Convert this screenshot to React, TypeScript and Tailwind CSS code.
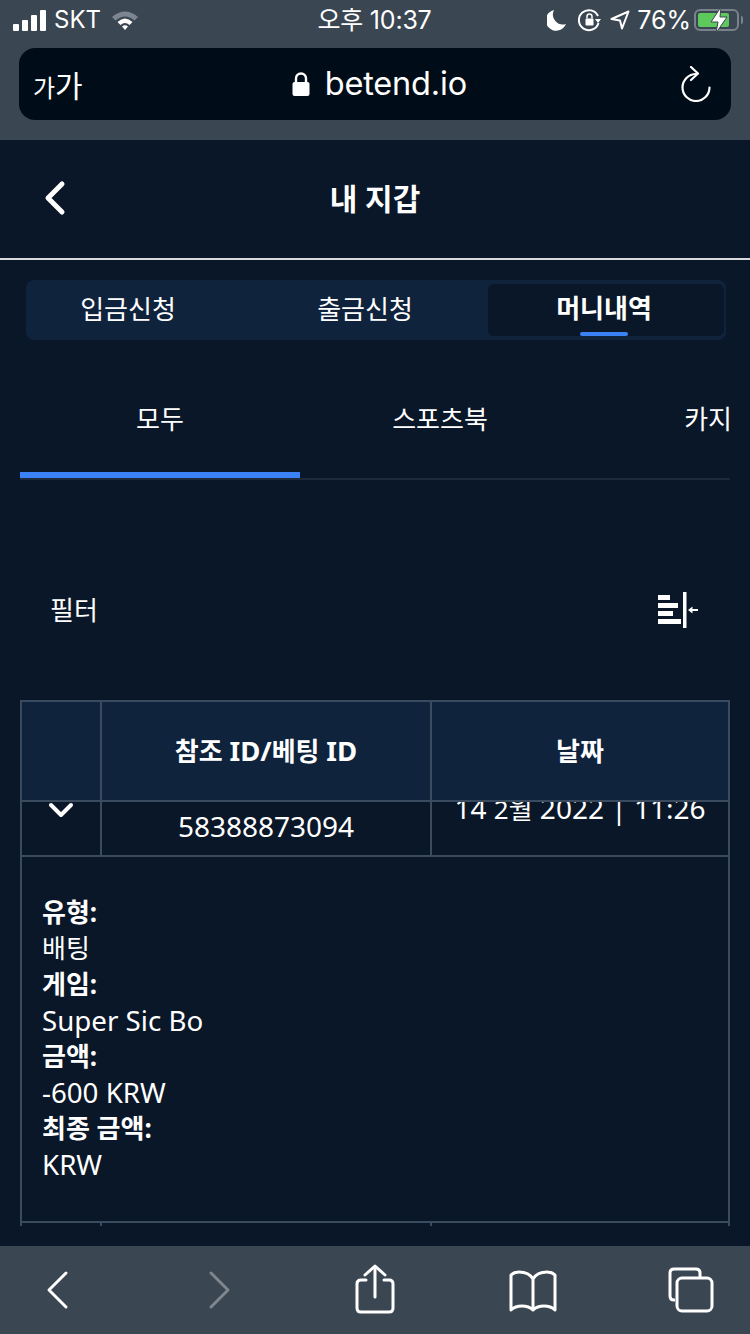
import React from 'react';

const font = "font-['Noto_Sans','Noto_Sans_CJK_KR',sans-serif]";

function StatusBar() {
  return (
    <div className="h-[40px] flex items-center justify-between pl-[13px] pr-[7px] text-white font-['Inter','Noto_Sans_CJK_KR',sans-serif]">
      <div className="flex items-center w-[200px]">
        <div className="flex items-end gap-[3px] h-[21px]">
          <div className="w-[6px] h-[7px] bg-white rounded-[1px]" />
          <div className="w-[6px] h-[11px] bg-white rounded-[1px]" />
          <div className="w-[6px] h-[16px] bg-white rounded-[1px]" />
          <div className="w-[6px] h-[21px] bg-white rounded-[1px]" />
        </div>
        <span className="ml-[8px] text-[24px] leading-none">SKT</span>
        <svg width="28" height="22" viewBox="0 0 28 22" className="ml-[10px]">
          <path d="M1 8 Q14 -3 27 8 L23.5 11.5 Q14 3.5 4.5 11.5Z" fill="#7d8690" />
          <path d="M6.5 13 Q14 6 21.5 13 L18.5 16 Q14 12 9.5 16Z" fill="#fff" />
          <path d="M11 17.5 Q14 14.8 17 17.5 L14 21Z" fill="#fff" />
        </svg>
      </div>
      <span className="text-[25px] leading-none tracking-[-0.2px] -ml-[1px]">오후 10:37</span>
      <div className="flex items-center justify-end w-[206px]">
        <svg width="20" height="22" viewBox="0 0 20 22">
          <path d="M7 1 A10.5 10.5 0 1 0 19 15 A10 10 0 0 1 7 1Z" fill="#fff" />
        </svg>
        <svg width="24" height="24" viewBox="0 0 24 24" className="ml-[11px]" fill="none">
          <path d="M20 8 A10 10 0 1 0 20.5 15" stroke="#fff" strokeWidth="2" />
          <path d="M17 11 L23 11 L20 15Z" fill="#fff" />
          <rect x="7.5" y="10.5" width="8" height="7" rx="1" fill="#fff" />
          <path d="M9 10.5 V8.5 A2.5 2.5 0 0 1 14 8.5 V10.5" stroke="#fff" strokeWidth="1.5" />
        </svg>
        <svg width="20" height="20" viewBox="0 0 20 20" className="ml-[8px]" fill="none">
          <path d="M18.5 1.5 L1.5 9 L10 10.5 L12 18.5Z" stroke="#fff" strokeWidth="2" strokeLinejoin="round" />
        </svg>
        <span className="ml-[7px] text-[25px] leading-none">76%</span>
        <div className="relative ml-[3px] w-[45px] h-[22px] border-2 border-[#79828c] rounded-[6px] p-[2px]">
          <div className="w-[31px] h-full bg-[#5dc85c] rounded-[2px]" />
          <svg width="22" height="28" viewBox="0 0 22 28" className="absolute left-[12px] -top-[5px]">
            <path d="M13 1 L3 16 L10 16 L8 27 L19 11 L12 11Z" fill="#fff" stroke="#3a4651" strokeWidth="1" />
          </svg>
        </div>
        <div className="ml-[2px] w-[2px] h-[8px] bg-[#79828c] rounded-r-sm" />
      </div>
    </div>
  );
}

function AddressBar() {
  return (
    <div className="mx-[19px] mt-[8px] h-[72px] rounded-[16px] bg-[#000d18] flex items-center justify-between pl-[14px] pr-[19px] text-white">
      <span className="text-[30px] leading-none font-['Noto_Sans_CJK_KR',sans-serif] flex items-baseline">
        <span className="text-[24px]">가</span>가
      </span>
      <div className="flex items-center gap-[15px] -ml-[4px]">
        <svg width="18" height="26" viewBox="0 0 18 26" fill="none">
          <path d="M4 12 V7.5 A5 5 0 0 1 14 7.5 V12" stroke="#fff" strokeWidth="2.4" />
          <rect x="0.5" y="11" width="17" height="14" rx="2" fill="#fff" />
        </svg>
        <span className="text-[32.5px] leading-none font-['Inter',sans-serif] tracking-[-0.2px]">betend.io</span>
      </div>
      <svg width="32" height="36" viewBox="0 0 32 36" fill="none" stroke="#fff" strokeWidth="2.2" strokeLinecap="round" strokeLinejoin="round">
        <path d="M16 8 A13.5 13.5 0 1 0 29.5 21.5" />
        <path d="M11 1 L18 7.5 L11 14" />
      </svg>
    </div>
  );
}

function PageHeader() {
  return (
    <div className="relative h-[120px] flex items-center justify-center border-b-2 border-[#d9dadc]">
      <svg width="24" height="36" viewBox="0 0 24 36" fill="none" stroke="#fff" strokeWidth="5" strokeLinecap="round" strokeLinejoin="round" className="absolute left-[44px] top-[40px]">
        <path d="M18 4 L4 18 L18 32" />
      </svg>
      <span className="text-[30px] font-bold text-white leading-none">내 지갑</span>
    </div>
  );
}

function WalletTabs() {
  return (
    <div className="mx-[26px] mt-[20px] h-[60px] w-[700px] rounded-[8px] bg-[#10233d] flex items-stretch pt-[4px] pb-[4px] pr-[2px] text-white text-[26px]">
      <div className="w-[204px] flex items-center justify-center -mt-[1px]">입금신청</div>
      <div className="w-[258px] pl-[12px] flex items-center justify-center -mt-[1px]">출금신청</div>
      <div className="relative flex-1 bg-[#0a1728] rounded-[6px] font-bold flex items-center justify-center pb-[3px] pr-[4px]">
        머니내역
        <div className="absolute bottom-0 left-[92px] w-[48px] h-[4px] rounded-[2px] bg-[#3b82f6]" />
      </div>
    </div>
  );
}

function CategoryTabs() {
  return (
    <div className="mx-[20px] mt-[40px] h-[100px] border-b-2 border-[#1d2a3b] flex items-stretch text-white text-[26px] relative">
      <div className="w-[280px] flex items-center justify-center pb-[20px]">모두</div>
      <div className="w-[280px] flex items-center justify-center pb-[20px]">스포츠북</div>
      <div className="flex-1 flex items-center justify-end pb-[20px] -mr-[2px]">카지</div>
      <div className="absolute left-0 bottom-0 w-[280px] h-[6px] bg-[#3b82f6]" />
    </div>
  );
}

function FilterRow() {
  return (
    <div className="mt-[100px] h-[60px] pl-[50px] pr-[52px] flex items-center justify-between text-white text-[26px]">
      <span>필터</span>
      <svg width="40" height="36" viewBox="0 0 40 36" fill="#fff">
        <rect x="0" y="3" width="12" height="5" />
        <rect x="0" y="11" width="20" height="5" />
        <rect x="0" y="19" width="15" height="5" />
        <rect x="0" y="27" width="23" height="5" />
        <rect x="25" y="0" width="3.5" height="36" />
        <rect x="33" y="17" width="7" height="2" />
        <path d="M30 18 L34.5 14.5 V21.5Z" />
      </svg>
    </div>
  );
}

function WalletTable() {
  return (
    <div className="mx-[20px] mt-[60px] border-x-2 border-[#3a4a5f]">
      <div className="grid grid-cols-[78px_2px_328px_2px_1fr] h-[102px] border-y-2 border-[#3a4a5f] bg-[#10233d] text-white text-[26px] font-bold">
        <div />
        <div className="bg-[#3a4a5f]" />
        <div className="flex items-center justify-center">
          <span>참조 <span className="text-[27.5px]">ID/</span>베팅 <span className="text-[27.5px]">ID</span></span>
        </div>
        <div className="bg-[#3a4a5f]" />
        <div className="flex items-center justify-center">날짜</div>
      </div>
      <div className="grid grid-cols-[78px_2px_328px_2px_1fr] h-[55px] border-b-2 border-[#3a4a5f] text-white text-[28px] overflow-hidden">
        <div className="flex justify-center">
          <svg width="26" height="16" viewBox="0 0 26 16" fill="none" stroke="#fff" strokeWidth="4" strokeLinecap="round" strokeLinejoin="round">
            <path d="M3 3 L13 13 L23 3" />
          </svg>
        </div>
        <div className="bg-[#3a4a5f]" />
        <div className="flex justify-center pt-[6px] leading-[36px]">58388873094</div>
        <div className="bg-[#3a4a5f]" />
        <div className="flex justify-center -mt-[12px] leading-[36px] whitespace-nowrap">
          <span>14 <span className="text-[26px]">2월</span> 2022 | 11:26</span>
        </div>
      </div>
      <div className="h-[366px] pt-[37px] pl-[20px] text-white text-[26px] leading-[36px] border-b-2 border-[#3a4a5f]">
        <div className="font-bold">유형:</div>
        <div>배팅</div>
        <div className="font-bold">게임:</div>
        <div className="text-[27.7px]">Super Sic Bo</div>
        <div className="font-bold">금액:</div>
        <div className="text-[27.7px]">-600 KRW</div>
        <div className="font-bold">최종 금액:</div>
        <div className="text-[27.7px]">KRW</div>
      </div>
      <div className="grid grid-cols-[78px_2px_328px_2px_1fr] h-[3px]">
        <div />
        <div className="bg-[#3a4a5f]" />
        <div />
        <div className="bg-[#3a4a5f]" />
        <div />
      </div>
    </div>
  );
}

function SafariToolbar() {
  return (
    <div className="mt-auto h-[88px] bg-[#3a4651] flex items-start pt-[17px] pl-[46px]">
      <svg width="26" height="40" viewBox="0 0 26 40" fill="none" stroke="#fff" strokeWidth="3" strokeLinecap="round" strokeLinejoin="round" className="mt-[7px]">
        <path d="M20 3 L3 20 L20 37" />
      </svg>
      <svg width="26" height="40" viewBox="0 0 26 40" fill="none" stroke="#7f878e" strokeWidth="3" strokeLinecap="round" strokeLinejoin="round" className="mt-[7px] ml-[133px]">
        <path d="M6 3 L23 20 L6 37" />
      </svg>
      <svg width="40" height="50" viewBox="0 0 40 50" fill="none" stroke="#fff" strokeWidth="3" strokeLinecap="round" strokeLinejoin="round" className="mt-[1px] ml-[124px]">
        <path d="M11 16 H6 Q2 16 2 20 V44 Q2 48 6 48 H34 Q38 48 38 44 V20 Q38 16 34 16 H29" />
        <path d="M20 33 V3" />
        <path d="M10 11 L20 2 L30 11" />
      </svg>
      <svg width="48" height="44" viewBox="0 0 48 44" fill="none" stroke="#fff" strokeWidth="3" strokeLinecap="round" strokeLinejoin="round" className="mt-[6px] ml-[114px]">
        <path d="M24 10 Q20 3 10 3 Q5 3 2 6 V41 Q6 37 13 37 Q20 37 24 41 Q28 37 35 37 Q42 37 46 41 V6 Q43 3 38 3 Q28 3 24 10 V41" />
      </svg>
      <svg width="46" height="46" viewBox="0 0 46 46" fill="none" stroke="#fff" strokeWidth="3" strokeLinejoin="round" className="mt-[4px] ml-[111px]">
        <path d="M7 33 H6 Q2 33 2 29 V6 Q2 2 6 2 H28 Q32 2 32 6 V11" />
        <rect x="9" y="11" width="35" height="33" rx="5" />
      </svg>
    </div>
  );
}

export default function App() {
  return (
    <div className={`w-[750px] h-[1334px] overflow-hidden bg-[#0a1728] flex flex-col ${font}`}>
      <div className="h-[140px] bg-[#3a4651] shrink-0">
        <StatusBar />
        <AddressBar />
      </div>
      <PageHeader />
      <WalletTabs />
      <CategoryTabs />
      <FilterRow />
      <WalletTable />
      <SafariToolbar />
    </div>
  );
}
